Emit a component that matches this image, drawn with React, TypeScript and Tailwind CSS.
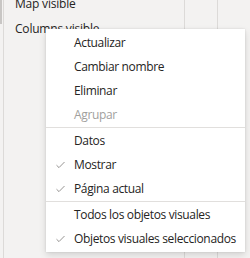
import React from 'react';

type Item = { label: string; checked?: boolean; disabled?: boolean };

const groups: Item[][] = [
  [
    { label: 'Actualizar' },
    { label: 'Cambiar nombre' },
    { label: 'Eliminar' },
    { label: 'Agrupar', disabled: true },
  ],
  [
    { label: 'Datos' },
    { label: 'Mostrar', checked: true },
    { label: 'Página actual', checked: true },
  ],
  [
    { label: 'Todos los objetos visuales' },
    { label: 'Objetos visuales seleccionados', checked: true },
  ],
];

function Check() {
  return (
    <svg width="9" height="8" viewBox="0 0 9 8" fill="none">
      <path d="M0.5 4.2 L3 6.6 L8.5 1" stroke="#8a8886" strokeWidth="0.9" />
    </svg>
  );
}

export default function App() {
  return (
    <div
      className="relative w-[250px] h-[258px] overflow-hidden bg-[#f3f2f1] text-[#252423]"
      style={{ fontFamily: '"Open Sans", "Noto Sans", sans-serif' }}
    >
      <div className="flex h-full">
        <div className="w-[4px] border-r border-[#dcdad8]">
          <div className="w-[2px] h-[24px] bg-[#c8c6c4]" />
        </div>
        <div className="w-[180px] pl-[11px] text-[12px] leading-[24px] -mt-[8px] tracking-[-0.2px]">
          <div>Map visible</div>
          <div className="mt-[1px]">Columns visible</div>
        </div>
        <div className="w-[33px] border-l border-[#dcdad8]" />
        <div className="flex-1 border-l border-[#dcdad8]" />
      </div>

      <div className="absolute left-[46px] top-[29px] w-[199px] bg-white pt-[2px] pb-[1px] shadow-[0_3px_7px_rgba(0,0,0,0.13),0_0_2px_rgba(0,0,0,0.11)] text-[12px] tracking-[-0.35px]">
        {groups.map((group, gi) => (
          <div key={gi} className={gi > 0 ? 'border-t border-[#e1dfdd] pt-[1px]' : ''}>
            {group.map((item) => (
              <div
                key={item.label}
                className={`flex items-center h-[24px] whitespace-nowrap ${item.disabled ? 'text-[#a19f9d]' : ''}`}
              >
                <span className="w-[28px] flex pl-[10px]">{item.checked && <Check />}</span>
                <span>{item.label}</span>
              </div>
            ))}
          </div>
        ))}
      </div>
    </div>
  );
}
